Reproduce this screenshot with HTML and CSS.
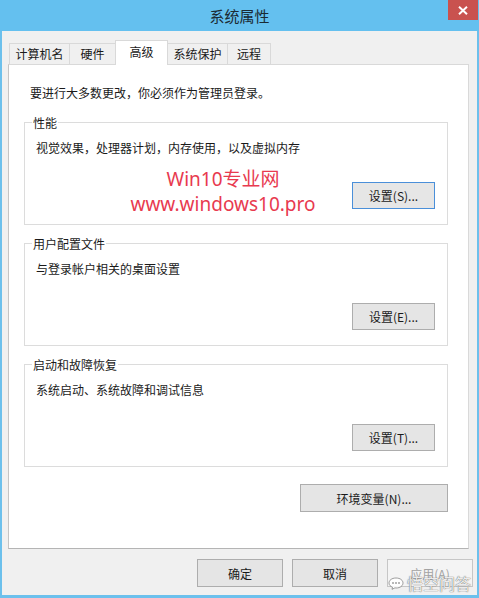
FILE: index.html
```html
<!DOCTYPE html>
<html lang="zh-CN">
<head>
<meta charset="utf-8">
<title>系统属性</title>
<link rel="stylesheet" href="styles.css">
</head>
<body>
<div class="window">
  <div class="titlebar">
    <span class="spacer"></span>
    <span class="title">系统属性</span>
    <span class="close" aria-label="关闭">
      <svg width="10" height="9" viewBox="0 0 10 9"><path d="M1 0.8 L9 8.2 M9 0.8 L1 8.2" stroke="#fff" stroke-width="2" fill="none"/></svg>
    </span>
  </div>
  <div class="frame">
    <div class="tabs">
      <span class="tab t1">计算机名</span>
      <span class="tab t2">硬件</span>
      <span class="tab t3 active">高级</span>
      <span class="tab t4">系统保护</span>
      <span class="tab t5">远程</span>
    </div>
    <div class="panel">
      <p class="intro">要进行大多数更改，你必须作为管理员登录。</p>
      <div class="group first">
        <span class="legend">性能</span>
        <p class="desc">视觉效果，处理器计划，内存使用，以及虚拟内存</p>
        <div class="row">
          <div class="mark">
            <div>Win10专业网</div>
            <div>www.windows10.pro</div>
          </div>
          <button class="btn small focus">设置(S)...</button>
        </div>
      </div>
      <div class="group">
        <span class="legend">用户配置文件</span>
        <p class="desc">与登录帐户相关的桌面设置</p>
        <button class="btn small push">设置(E)...</button>
      </div>
      <div class="group">
        <span class="legend">启动和故障恢复</span>
        <p class="desc">系统启动、系统故障和调试信息</p>
        <button class="btn small push">设置(T)...</button>
      </div>
      <button class="btn env">环境变量(N)...</button>
    </div>
    <div class="actions">
      <button class="btn act">确定</button>
      <button class="btn act">取消</button>
      <button class="btn act disabled">应用(A)</button>
    </div>
    <div class="wukong">
      <svg width="16" height="13" viewBox="0 0 16 13"><path d="M8 1 C3.5 1 1 3.5 1 6 C1 8 2.5 9.5 4.5 10.2 L4 12.3 L7 10.8 C7.3 10.9 7.7 11 8 11 C12.5 11 15 8.5 15 6 C15 3.5 12.5 1 8 1 Z" fill="rgba(255,255,255,0.85)" stroke="rgba(120,120,120,0.7)" stroke-width="1"/><circle cx="5" cy="6" r="1" fill="rgba(120,120,120,0.7)"/><circle cx="8" cy="6" r="1" fill="rgba(120,120,120,0.7)"/><circle cx="11" cy="6" r="1" fill="rgba(120,120,120,0.7)"/></svg>
      <span>悟空问答</span>
    </div>
  </div>
</div>
</body>
</html>
```
FILE: styles.css
```css
* { box-sizing: border-box; }
html, body { margin: 0; padding: 0; }
body {
  width: 479px;
  height: 598px;
  font-family: "Noto Sans CJK SC", "Noto Sans", sans-serif;
  font-size: 12px;
  color: #1a1a1a;
  background: #f0f0f0;
  overflow: hidden;
}
.window {
  width: 479px;
  height: 598px;
  display: flex;
  flex-direction: column;
}
.titlebar {
  height: 31px;
  flex: none;
  background: #64c0ef;
  display: grid;
  grid-template-columns: 1fr auto 1fr;
}
.title {
  font-size: 15px;
  line-height: 31px;
  color: #1b2a33;
  padding-left: 0;
}
.close {
  justify-self: end;
  align-self: start;
  width: 30px;
  height: 20px;
  margin-right: 1px;
  background: #c9524f;
  display: flex;
  align-items: center;
  justify-content: center;
}
.frame {
  flex: 1;
  position: relative;
  display: flex;
  flex-direction: column;
  background: #f0f0f0;
  border-left: 2px solid #6cc0ec;
  border-right: 2px solid #6cc0ec;
  border-bottom: 3px solid #6cc0ec;
  padding-top: 9px;
}
.tabs {
  height: 24px;
  display: flex;
  align-items: flex-end;
  margin-left: 7px;
  position: relative;
  z-index: 2;
}
.tab {
  height: 21px;
  line-height: 19px;
  text-align: center;
  background: #f0f0f0;
  border: 1px solid #d9d9d9;
  border-bottom: none;
  margin-left: -1px;
  color: #1a1a1a;
}
.t1 { width: 61px; margin-left: 0; }
.t2 { width: 47px; }
.t3 { width: 53px; }
.t4 { width: 61px; }
.t5 { width: 44px; }
.tab.active {
  height: 25px;
  margin-bottom: -1px;
  background: #fff;
  line-height: 21px;
  position: relative;
  z-index: 3;
}
.panel {
  margin-left: 6px;
  width: 461px;
  height: 485px;
  background: #fff;
  border: 1px solid #d9d9d9;
  border-left-color: #c4c4c4;
  border-bottom-color: #b4b4b4;
  display: flex;
  flex-direction: column;
  padding: 0 20px 0 15px;
}
.intro {
  margin: 19px 0 0 6px;
  line-height: 17px;
}
.group {
  margin-top: 18px;
  height: 103px;
  border: 1px solid #dcdcdc;
  display: flex;
  flex-direction: column;
  padding: 0 12px 15px 11px;
}
.group.first { margin-top: 21px; }
.legend {
  align-self: flex-start;
  margin: -9px 0 0 -4px;
  padding: 0 1px;
  background: #fff;
  line-height: 17px;
}
.desc {
  margin: 8px 0 0 0;
  line-height: 17px;
}
.row {
  margin-top: auto;
  display: flex;
  align-items: flex-end;
}
.mark {
  width: 192px;
  margin-left: 91px;
  margin-bottom: -8px;
  text-align: center;
  color: #e83a4f;
  font-family: "Noto Sans", "Noto Sans CJK SC", sans-serif;
  font-size: 19px;
  line-height: 25px;
}
.btn {
  font-family: "Noto Sans CJK SC", "Noto Sans", sans-serif;
  font-size: 12px;
  color: #1a1a1a;
  background: #e5e5e5;
  border: 1px solid #adadad;
  padding: 0;
  margin: 0;
}
.btn.small {
  width: 83px;
  height: 27px;
}
.row .btn { margin-left: auto; }
.btn.push {
  margin-top: auto;
  align-self: flex-end;
}
.btn.focus {
  border-color: #4a8fd9;
  background: #e6e6e6;
}
.btn.env {
  align-self: flex-end;
  margin-top: 17px;
  width: 148px;
  height: 28px;
}
.actions {
  margin-top: 10px;
  display: flex;
  justify-content: flex-end;
  gap: 9px;
  padding-right: 4px;
}
.btn.act {
  width: 86px;
  height: 28px;
}
.btn.disabled {
  color: #a3a3a3;
  background: #f4f4f4;
  border-color: #c6c6c6;
}
.wukong {
  position: absolute;
  right: 6px;
  bottom: 2px;
  display: flex;
  align-items: center;
  gap: 3px;
  font-size: 16px;
  line-height: 20px;
  color: rgba(255,255,255,0.9);
  text-shadow: 0 0 1px rgba(90,90,90,0.8), 0 0 1px rgba(90,90,90,0.8);
}
```
